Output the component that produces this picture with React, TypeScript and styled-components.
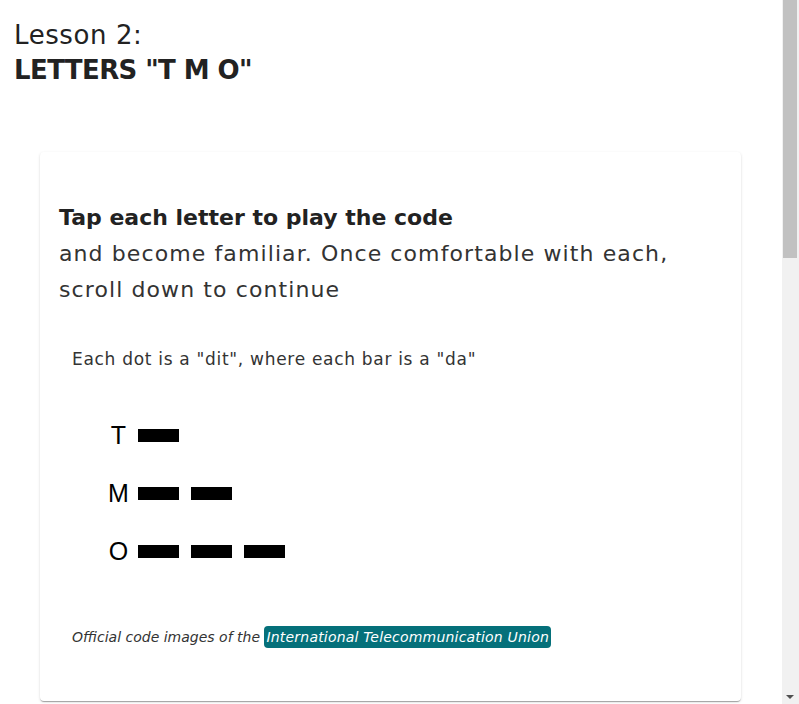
import React from "react";
import styled, { createGlobalStyle } from "styled-components";

const GlobalStyle = createGlobalStyle`
  html, body {
    margin: 0;
    padding: 0;
    background: #ffffff;
    overflow: hidden;
  }
  body {
    font-family: "DejaVu Sans", "Open Sans", sans-serif;
    color: #222222;
  }
`;

const Shell = styled.div`
  display: flex;
  height: 100vh;
`;

const Main = styled.main`
  flex: 1;
  min-width: 0;
  overflow: hidden;
`;

const ScrollRail = styled.div`
  width: 17px;
  flex-shrink: 0;
  background: #f1f1f1;
  display: flex;
  flex-direction: column;
  justify-content: space-between;
  align-items: center;
`;

const ScrollThumb = styled.div`
  width: 14px;
  height: 258px;
  margin-left: -1px;
  background: #c1c1c1;
`;

const ScrollArrow = styled.div`
  width: 0;
  height: 0;
  margin: 0 0 5px -1px;
  border-left: 4px solid transparent;
  border-right: 4px solid transparent;
  border-top: 4px solid #505050;
`;

const Page = styled.div`
  padding: 18px 0 0 0;
`;

const LessonHeader = styled.header`
  padding-left: 14px;
`;

const LessonNumber = styled.div`
  font-size: 26px;
  line-height: 35px;
  font-weight: 400;
  letter-spacing: 0.6px;
  color: #222222;
`;

const LessonTitle = styled.h1`
  margin: 0;
  font-size: 26px;
  line-height: 35px;
  font-weight: 600;
  letter-spacing: -0.6px;
  color: #222222;
`;

const Card = styled.section`
  margin: 64px 0 0 40px;
  width: 701px;
  height: 549px;
  box-sizing: border-box;
  padding: 48px 19px 0 19px;
  background: #ffffff;
  border-radius: 4px;
  box-shadow: 0 2px 1px -1px rgba(0, 0, 0, 0.2), 0 1px 1px 0 rgba(0, 0, 0, 0.14),
    0 1px 3px 0 rgba(0, 0, 0, 0.12);
`;

const Intro = styled.p`
  margin: 0;
  font-size: 22px;
  line-height: 36px;
  letter-spacing: 1.1px;
  color: #333333;
`;

const IntroStrong = styled.strong`
  display: block;
  font-weight: 700;
  letter-spacing: 0;
  color: #222222;
`;

const Hint = styled.p`
  margin: 39px 0 0 13px;
  font-size: 17px;
  line-height: 24px;
  letter-spacing: 0.7px;
  color: #333333;
`;

const CodeList = styled.div`
  margin: 50px 0 0 49px;
  display: flex;
  flex-direction: column;
  gap: 30px;
`;

const CodeRow = styled.button`
  display: flex;
  align-items: center;
  gap: 9px;
  padding: 0;
  border: none;
  background: none;
  cursor: pointer;
  height: 28px;
`;

const Letter = styled.span`
  width: 21px;
  text-align: center;
  font-family: "Liberation Sans", Arial, sans-serif;
  font-size: 25px;
  line-height: 28px;
  color: #000000;
`;

const Symbols = styled.span`
  display: flex;
  gap: 12px;
`;

const Dah = styled.span`
  display: inline-block;
  width: 41px;
  height: 13px;
  background: #000000;
`;

const Credit = styled.p`
  margin: 61px 0 0 13px;
  font-size: 14px;
  line-height: 22px;
  font-style: italic;
  color: #333333;
`;

const Chip = styled.a`
  display: inline-block;
  padding: 0 2px;
  line-height: 22px;
  letter-spacing: 0.2px;
  background: #05707a;
  color: #ffffff;
  border-radius: 4px;
  text-decoration: none;
`;

const letters: { char: string; code: number }[] = [
  { char: "T", code: 1 },
  { char: "M", code: 2 },
  { char: "O", code: 3 },
];

export default function App() {
  return (
    <Shell>
      <GlobalStyle />
      <Main>
        <Page>
          <LessonHeader>
            <LessonNumber>Lesson 2:</LessonNumber>
            <LessonTitle>LETTERS "T M O"</LessonTitle>
          </LessonHeader>
          <Card>
            <Intro>
              <IntroStrong>Tap each letter to play the code</IntroStrong>
              and become familiar. Once comfortable with each, scroll down to
              continue
            </Intro>
            <Hint>Each dot is a "dit", where each bar is a "da"</Hint>
            <CodeList>
              {letters.map((l) => (
                <CodeRow key={l.char}>
                  <Letter>{l.char}</Letter>
                  <Symbols>
                    {Array.from({ length: l.code }).map((_, i) => (
                      <Dah key={i} />
                    ))}
                  </Symbols>
                </CodeRow>
              ))}
            </CodeList>
            <Credit>
              Official code images of the{" "}
              <Chip href="#">International Telecommunication Union</Chip>
            </Credit>
          </Card>
        </Page>
      </Main>
      <ScrollRail aria-hidden>
        <ScrollThumb />
        <ScrollArrow />
      </ScrollRail>
    </Shell>
  );
}
